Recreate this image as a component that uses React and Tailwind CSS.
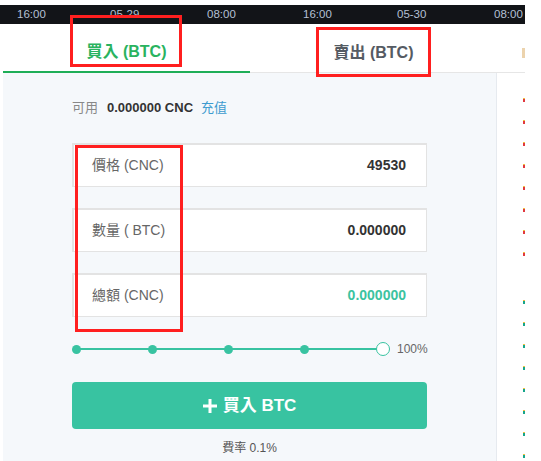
import React from 'react';

const times = [
  { label: '16:00', w: 'w-[93px]' },
  { label: '05-29', w: 'w-[97px]' },
  { label: '08:00', w: 'w-[96px]' },
  { label: '16:00', w: 'w-[94px]' },
  { label: '05-30', w: 'w-[97px]' },
  { label: '08:00', w: 'w-[40px]' },
];

const fields = [
  { label: '價格 (CNC)', value: '49530', valueClass: 'text-[#333]' },
  { label: '數量 ( BTC)', value: '0.000000', valueClass: 'text-[#333]' },
  { label: '總額 (CNC)', value: '0.000000', valueClass: 'text-[#3cc39f]' },
];

const Field = ({ label, value, valueClass }) => (
  <div className="h-[44px] flex items-center justify-between bg-white border border-[#e3e3e3] border-t-2 border-l-2 pl-[18px] pr-[20px]">
    <span className="text-[14px] text-[#666]">{label}</span>
    <span className={`text-[14px] font-bold ${valueClass}`}>{value}</span>
  </div>
);

const Slider = () => (
  <div className="flex items-center h-[14px] mt-[25px]">
    <div className="relative flex items-center gap-[67px]">
      <div className="absolute left-[4px] right-[7px] top-[6px] h-[2px] bg-[#38c3a1]" />
      <span className="relative w-[9px] h-[9px] rounded-full bg-[#38c3a1]" />
      <span className="relative w-[9px] h-[9px] rounded-full bg-[#38c3a1]" />
      <span className="relative w-[9px] h-[9px] rounded-full bg-[#38c3a1]" />
      <span className="relative w-[9px] h-[9px] rounded-full bg-[#38c3a1]" />
      <span className="relative w-[14px] h-[14px] rounded-full bg-white border border-[#38c3a1]" />
    </div>
    <span className="ml-[7px] text-[12px] text-[#666]">100%</span>
  </div>
);

// edge of the order book column, clipped by the window
const MarkColumn = () => (
  <div className="flex flex-col pt-[16px] pl-[26px]">
    {Array.from({ length: 8 }).map((_, i) => (
      <div key={'r' + i} className="h-[22px] flex items-center">
        <span className="w-[2px] h-[4px] border-t border-[#f0c040] bg-[#e0383e]" />
      </div>
    ))}
    <div className="h-[26px]" />
    {Array.from({ length: 8 }).map((_, i) => (
      <div key={'g' + i} className="h-[22px] flex items-center">
        <span className="w-[2px] h-[4px] border-t border-[#f0c040] bg-[#16a58a]" />
      </div>
    ))}
  </div>
);

const App = () => {
  return (
    <div
      className="relative w-[541px] h-[461px] overflow-hidden bg-white flex flex-col"
      style={{ fontFamily: '"Liberation Sans", "Noto Sans CJK TC", sans-serif' }}
    >
      <div className="h-[5px] shrink-0" />
      <div className="h-[19px] w-[525px] shrink-0 bg-[#121418] flex items-center pl-[17px] overflow-hidden">
        {times.map((t, i) => (
          <span key={i} className={`${t.w} shrink-0 text-[11.5px] text-[#b4c0d4] leading-none`}>
            {t.label}
          </span>
        ))}
      </div>

      <div className="h-[49px] shrink-0 flex">
        <div className="w-[3px]" />
        <div className="w-[247px] flex items-center justify-center pt-[9px] border-b-2 border-[#1eae57]">
          <span className="text-[16px] font-bold text-[#29b35f]">買入 (BTC)</span>
        </div>
        <div className="w-[247px] flex items-center justify-center pt-[9px] border-b border-[#e6e6e6]">
          <span className="text-[16px] font-bold text-[#555b63]">賣出 (BTC)</span>
        </div>
        <div className="w-[28px] flex items-center pt-[9px] pl-[25px] border-b border-[#e6e6e6]">
          <span className="w-[3px] h-[10px] bg-[#ecd3ad]" />
        </div>
      </div>

      <div className="flex flex-1">
        <div className="w-[3px]" />
        <div className="w-[494px] bg-[#f5f8fb] border-r border-[#e6eaef] pl-[69px]">
          <div className="w-[355px] flex flex-col">
            <div className="mt-[26px] h-[18px] flex items-center text-[13px]">
              <span className="text-[#888]">可用</span>
              <span className="ml-[9px] font-bold text-[#333]">0.000000 CNC</span>
              <span className="ml-[8px] text-[#3d9bcf]">充值</span>
            </div>
            <div className="mt-[26px] flex flex-col gap-[21px]">
              {fields.map((f) => (
                <Field key={f.label} {...f} />
              ))}
            </div>
            <Slider />
            <button className="mt-[26px] h-[47px] rounded-[4px] bg-[#38c3a1] flex items-center justify-center gap-[6px] text-white text-[17px] font-bold">
              <svg width="14" height="14" viewBox="0 0 14 14">
                <path d="M7 0v14M0 7h14" stroke="#fff" strokeWidth="3" />
              </svg>
              <span>買入 BTC</span>
            </button>
            <div className="mt-[10px] text-center text-[12px] text-[#555]">費率 0.1%</div>
          </div>
        </div>
        <MarkColumn />
      </div>

      <div className="absolute left-[70px] top-[15px] w-[112px] h-[52px] border-[3px] border-[#ff1f1f]" />
      <div className="absolute left-[316px] top-[27px] w-[115px] h-[50px] border-[3px] border-[#ff1f1f]" />
      <div className="absolute left-[75px] top-[145px] w-[108px] h-[187px] border-[3px] border-[#ff1f1f]" />
    </div>
  );
};

export default App;
